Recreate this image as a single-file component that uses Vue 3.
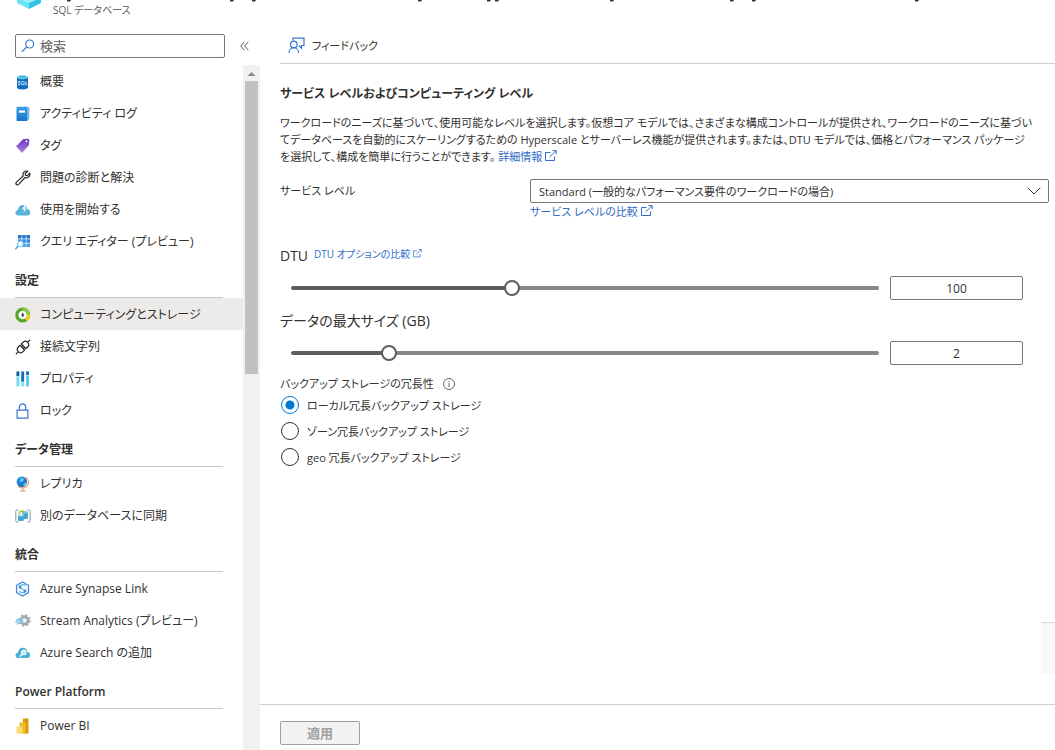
<script setup>
import { ref } from 'vue'

const search = ref('')
const tier = ref('standard')
const dtu = ref('100')
const maxSize = ref('2')
const dtuPosition = ref(372)
const sizePosition = ref(157)
const redundancy = ref('local')

const groups = [
  {
    title: '',
    items: [
      { icon: 'sql', label: '概要' },
      { icon: 'log', label: 'アクティビティ ログ' },
      { icon: 'tag', label: 'タグ' },
      { icon: 'wrench', label: '問題の診断と解決' },
      { icon: 'start', label: '使用を開始する' },
      { icon: 'query', label: 'クエリ エディター (プレビュー)' },
    ],
  },
  {
    title: '設定',
    items: [
      { icon: 'gauge', label: 'コンピューティングとストレージ', active: true },
      { icon: 'plug', label: '接続文字列' },
      { icon: 'props', label: 'プロパティ' },
      { icon: 'lock', label: 'ロック' },
    ],
  },
  {
    title: 'データ管理',
    items: [
      { icon: 'globe', label: 'レプリカ' },
      { icon: 'sync', label: '別のデータベースに同期' },
    ],
  },
  {
    title: '統合',
    items: [
      { icon: 'synapse', label: 'Azure Synapse Link' },
      { icon: 'stream', label: 'Stream Analytics (プレビュー)' },
      { icon: 'search-cloud', label: 'Azure Search の追加' },
    ],
  },
  {
    title: 'Power Platform',
    items: [{ icon: 'powerbi', label: 'Power BI' }],
  },
]

const redundancyOptions = [
  { value: 'local', label: 'ローカル冗長バックアップ ストレージ' },
  { value: 'zone', label: 'ゾーン冗長バックアップ ストレージ' },
  { value: 'geo', label: 'geo 冗長バックアップ ストレージ' },
]

// Descenders of the heading that is scrolled off above the top edge
const descenders = [0, 163, 185, 351, 420, 428, 543, 663, 685, 848]

const fill = (position) => ({ '--fill': `calc(8px + (100% - 16px) * ${position / 1000})` })
</script>

<template>
  <div class="page">
    <svg class="sprite" aria-hidden="true">
      <defs>
        <linearGradient id="g-tag" x1="0" y1="0" x2="0" y2="1">
          <stop offset="0" stop-color="#6a35c0" /><stop offset="1" stop-color="#b484e0" />
        </linearGradient>
        <linearGradient id="g-log" x1="0" y1="0" x2="0" y2="1">
          <stop offset="0" stop-color="#3aa0e8" /><stop offset="1" stop-color="#1673c8" />
        </linearGradient>
        <linearGradient id="g-globe" x1="0" y1="0" x2="1" y2="1">
          <stop offset="0" stop-color="#2a9be8" /><stop offset="1" stop-color="#0f5fb8" />
        </linearGradient>
        <symbol id="i-sql" viewBox="0 0 16 16">
          <path d="M2 3v10.2C2 14.5 4.5 15.500 7.500 15.500S13 14.500 13 13.200V3z" fill="#0f6bc0" />
          <ellipse cx="7.500" cy="3" rx="5.500" ry="2.200" fill="#8edff2" />
          <ellipse cx="7.500" cy="3.200" rx="3.800" ry="1.200" fill="#43b5dc" />
          <path d="M5.200 7.500H3.800c-.9 0-.9 1.500 0 1.500h.6c1 0 1 1.800 0 1.800H3M8.400 7.500H7.300c-.7 0-.9.5-.9 1.600s.2 1.600.9 1.600h1c.6 0 .8-.5.8-1.600s-.2-1.600-.7-1.600M8.200 10l1.100 1.300M10.800 7.300v3.400h1.500" fill="none" stroke="#e8f6ff" stroke-width=".9" />
        </symbol>
        <symbol id="i-log" viewBox="0 0 16 16">
          <path d="M3 1h11v12.800H3z" fill="#a9dcf5" />
          <path d="M2.500 .8H11.500c.6 0 1 .4 1 1V14c0 .6-.4 1-1 1H2.500c-.6 0-1-.4-1-1V1.800c0-.6.400-1 1-1z" fill="url(#g-log)" />
          <path d="M13.800 1.500v12" stroke="#4b9bd6" stroke-width=".8" />
          <rect x="4" y="4.500" width="6" height="2.200" fill="#fff" />
        </symbol>
        <symbol id="i-tag" viewBox="0 0 16 16">
          <path d="M1 8.300 8 1.200l5.200-.5 1.200 1.200-.5 5.300L7 15z" fill="url(#g-tag)" />
          <circle cx="11.500" cy="3.300" r="1" fill="#fff" />
        </symbol>
        <symbol id="i-wrench" viewBox="0 0 16 16">
          <path d="M12.800 1.200 10.200 3.500l.3 1.800 1.900.300 2.400-2.500c.6 2.300-1 4.700-3.300 4.700-.7 0-1-.1-1.500-.3l-6.300 6.900c-1.500 1.500-3.700-.5-2.400-2l6.900-6.400C7.200 3.200 9.300.3 12.800 1.200z" fill="#fff" stroke="#2b2b2b" stroke-width="1.200" stroke-linejoin="round" />
        </symbol>
        <symbol id="i-start" viewBox="0 0 16 16">
          <path d="M3.300 13.500C-.6 13.500-.4 8.100 3 7.900 3.200 4.300 6.600 1.700 9.700 3.500c1.600.8 2.200 2 2.500 3.500 3.700 0 4.100 6.300.4 6.500z" fill="#59b4d9" />
          <path d="M9.800 2.500 6.800 7.500h2.600L8.200 11l3.900-4.500H9.800L12 2.700z" fill="#e2f5fc" />
        </symbol>
        <symbol id="i-query" viewBox="0 0 16 16">
          <path d="M3 1h3.600v3.600H3zM7.200 1h3.600v3.600H7.200zM11.400 1H15v3.600h-3.600z" fill="#2475cf" />
          <path d="M3 5.200h3.600v3.600H3zM7.200 5.200h3.600v3.600H7.200zM11.400 5.200H15v3.600h-3.600z" fill="#3788e0" />
          <path d="M7.200 9.400h3.600V13H7.200zM11.400 9.400H15V13h-3.600z" fill="#4f9cec" />
          <path d="m.7 14.700 3-3" stroke="#3ca9df" stroke-width="1.500" stroke-linecap="round" />
          <circle cx="5.300" cy="10" r="2.900" fill="#effbff" stroke="#6bcff0" />
        </symbol>
        <symbol id="i-gauge" viewBox="0 0 16 16">
          <circle cx="7.700" cy="8" r="5.900" fill="#fff" stroke="#55a529" stroke-width="3.200" />
          <path d="M7.700 2.100A5.900 5.900 0 0 1 13.600 8" fill="none" stroke="#8dc63f" stroke-width="3.200" />
          <path d="M13.600 8a5.900 5.900 0 0 1-2.500 4.800" fill="none" stroke="#f3cf24" stroke-width="3.200" />
          <path d="M7.500 5.500 9.300 8l-1.600 2.500L6.300 8z" fill="#4c4c4c" />
        </symbol>
        <symbol id="i-plug" viewBox="0 0 16 16">
          <g transform="rotate(-45 8 8)" fill="none" stroke="#252525" stroke-width="1.200">
            <path d="M-2 8h3.500M14.500 8H18M7 4.700H4.700a3.300 3.300 0 0 0 0 6.600H7zM9 4.700h2.300a3.300 3.300 0 0 1 0 6.600H9zM7 6.700h2M7 9.300h2" />
          </g>
        </symbol>
        <symbol id="i-props" viewBox="0 0 16 16">
          <path d="M1.500 .5h2.800v15H1.500z" fill="#69daf0" /><path d="M1.500 .5h2.800v5H1.500z" fill="#195b9d" />
          <path d="M6.300 .5h2.800v15H6.300z" fill="#79def2" /><path d="M6.300 .5h2.800v10.500H6.300z" fill="#1d69b5" />
          <path d="M11.100 .5h2.800v15h-2.800z" fill="#48cdf0" /><path d="M11.100 .5h2.800v4h-2.800z" fill="#1870be" />
          <path d="M1 5.500h3.500M6 11h3.500M10.800 4.500h3.500" stroke="#fff" stroke-width=".6" />
        </symbol>
        <symbol id="i-lock" viewBox="0 0 16 16" fill="none" stroke="#3b72cf" stroke-width="1.200">
          <path d="M2.100 7.100h10.800v8H2.100zM4.300 7V4.300a3.200 3.500 0 0 1 6.400 0V7" />
        </symbol>
        <symbol id="i-globe" viewBox="0 0 16 16">
          <path d="M10.500 1.200c5 3 3.500 10.500-3 10.700-2 0-3.500-.7-4.800-2M7.700 12v2.500M5 14.900h5.600" fill="none" stroke="#e9a276" stroke-width="1.300" />
          <circle cx="6.800" cy="5.700" r="5.200" fill="url(#g-globe)" />
          <path d="M6.500 1.500 9 3 8 5.800l-2.500.5-.9-2zM8.500 7.500l2-1 .8 1-1.700 2.300-1.600-.7z" fill="#63cdea" />
        </symbol>
        <symbol id="i-sync" viewBox="0 0 16 16">
          <path d="M3.500 2H2Q.8 2 .8 3.500v9Q.8 14 2 14h1.500M12.500 2H14q1.200 0 1.200 1.500v9q0 1.500-1.200 1.500h-1.500" fill="none" stroke="#8795a2" stroke-width="1" />
          <path d="M7.500 4v6.300c0 1.100 5.500 1.100 5.500 0V4z" fill="#48a5cb" /><ellipse cx="10.250" cy="4" rx="2.750" ry="1.200" fill="#91cde0" />
          <path d="M3 7v5.200c0 1.200 5.800 1.200 5.800 0V7z" fill="#47a8d0" /><ellipse cx="5.900" cy="7" rx="2.900" ry="1.200" fill="#bfe5ef" />
          <path d="M3.500 5.500c.4-2.400 2-3.300 4-2.700V1.500l2.200 2-2.200 2V4.300c-1.300-.3-2.100 0-2.700 1.500z" fill="#94c83d" />
        </symbol>
        <symbol id="i-synapse" viewBox="0 0 16 16">
          <path d="m7.500 .9 6 3.400v7.300l-6 3.500-6-3.500V4.300z" fill="#f5fbff" stroke="#4288dc" stroke-width="1.200" />
          <path d="M11 4.500C8.500 3 4.500 3.800 4.500 6S10.500 8.300 10.500 10.200s-3.500 1.800-6.500.3" fill="none" stroke="#5ab5ea" stroke-width="1.200" />
          <circle cx="5" cy="6" r="1.500" fill="#3b91db" /><circle cx="10" cy="10" r="1.500" fill="#3b91db" />
        </symbol>
        <symbol id="i-stream" viewBox="0 0 16 16">
          <circle cx="9.500" cy="7.500" r="3.600" fill="#eef7fb" stroke="#a4a8ad" stroke-width="2.600" />
          <circle cx="9.500" cy="7.500" r="5.400" fill="none" stroke="#a4a8ad" stroke-width="1.600" stroke-dasharray="2.200 2.040" />
          <path d="M1 7c3 0 3.500-2 7-1.500M.3 9c4 0 4-2 8.200-1.300M1.500 11c3 0 3-2 6.500-1.200" fill="none" stroke="#7ec8ed" stroke-width="1.300" />
        </symbol>
        <symbol id="i-search-cloud" viewBox="0 0 16 16">
          <path d="M3.500 13C-.5 13-.3 8 3 7.800 3 3.500 7.500 1.300 10.500 3.600c1.200.9 1.700 2 1.900 3.300 3.700.1 3.700 6 .2 6.100z" fill="#4fb0d5" />
          <circle cx="8.800" cy="7.600" r="2.200" fill="#b5e4f5" stroke="#fff" stroke-width="1.100" /><path d="m7.200 9.300-2.400 2.200" stroke="#fff" stroke-width="1.300" />
        </symbol>
        <symbol id="i-powerbi" viewBox="0 0 16 16">
          <rect x="8" y=".5" width="5.500" height="15" rx=".5" fill="#d69b0b" />
          <path d="M4.500 4.500H10q.5 0 .5.500v10.500h-6z" fill="#edbd21" />
          <path d="M2 8.500h4.500q1 0 1 1v6H2q-.5 0-.5-.5V9q0-.5.500-.5z" fill="#f9dc70" />
        </symbol>
        <symbol id="i-external" viewBox="0 0 12 12" fill="none" stroke="currentColor">
          <path d="M5.500 2.500h-5v8h9V6.500M4.500 7 11 .8M7.500 .6h3.700v3.700" />
        </symbol>
      </defs>
    </svg>

    <svg class="clipped-title" aria-hidden="true" width="860" height="2" viewBox="0 0 860 2">
      <path v-for="x in descenders" :key="x" :d="`M${x} 0h4l-1 1.500h-3z`" fill="#333" />
    </svg>

    <aside class="sidebar">
      <header class="resource">
        <svg width="24" height="10" viewBox="0 0 24 10" aria-hidden="true">
          <path d="M0 0h12v9L0 3z" fill="#6fe3f6" /><path d="M12 0h12v3l-12 6z" fill="#35c2e8" /><path d="M5 0h14l-7 3z" fill="#9beefa" />
        </svg>
        <span>SQL データベース</span>
      </header>
      <div class="search-row">
        <label class="search">
          <svg width="14" height="14" viewBox="0 0 14 14" fill="none" stroke="#3a78d0" stroke-width="1.200" aria-hidden="true">
            <circle cx="8.700" cy="5" r="4" /><path d="M5.700 8 .8 12.900" />
          </svg>
          <input v-model="search" type="text" placeholder="検索" aria-label="検索" />
        </label>
        <button class="collapse" type="button" aria-label="メニューを折りたたむ">
          <svg width="9" height="10" viewBox="0 0 9 10" fill="none" stroke="#666"><path d="M4.300 .7.700 5l3.600 4.300M8.300.7 4.700 5l3.600 4.300" /></svg>
        </button>
      </div>
      <div class="menu">
        <nav class="nav">
          <section v-for="group in groups" :key="group.title">
            <h2 v-if="group.title" class="group-title">{{ group.title }}</h2>
            <ul>
              <li v-for="item in group.items" :key="item.label">
                <a href="#" class="item" :class="{ active: item.active }">
                  <svg width="16" height="16" aria-hidden="true"><use :href="`#i-${item.icon}`" /></svg>
                  <span>{{ item.label }}</span>
                </a>
              </li>
            </ul>
          </section>
        </nav>
        <div class="scrollbar" aria-hidden="true">
          <svg width="17" height="16" viewBox="0 0 17 16"><path d="M4.500 11h8l-4-4z" fill="#8a8a8a" /></svg>
          <div class="thumb"></div>
        </div>
      </div>
    </aside>

    <main class="main">
      <div class="toolbar">
        <button type="button" class="feedback">
          <svg width="17" height="17" viewBox="0 0 17 17" fill="none" stroke="#3475cc" stroke-width="1.200" aria-hidden="true">
            <path d="M5 3.500V1.100h11v7.400h-2.500v2.700L11 8.500M1 16c0-7 9.600-7 9.600 0" /><circle cx="5.800" cy="7.500" r="3.300" />
          </svg>
          <span>フィードバック</span>
        </button>
      </div>

      <form class="content" @submit.prevent>
        <h1>サービス レベルおよびコンピューティング レベル</h1>
        <p class="intro">
          ワークロードのニーズに基づいて、使用可能なレベルを選択します。仮想コア モデルでは、さまざまな構成コントロールが提供され、ワークロードのニーズに基づい<br />てデータベースを自動的にスケーリングするための Hyperscale とサーバーレス機能が提供されます。または、DTU モデルでは、価格とパフォーマンス パッケージ<br />を選択して、構成を簡単に行うことができます。
          <a href="#">詳細情報 <svg width="12" height="12" aria-hidden="true"><use href="#i-external" /></svg></a>
        </p>

        <div class="tier-row">
          <label for="tier">サービス レベル</label>
          <div class="tier-field">
            <div class="select">
              <select id="tier" v-model="tier">
                <option value="standard">Standard (一般的なパフォーマンス要件のワークロードの場合)</option>
              </select>
              <svg width="14" height="8" viewBox="0 0 14 8" fill="none" stroke="#444" aria-hidden="true"><path d="m.7.700 6.300 6.300L13.300.7" /></svg>
            </div>
            <a href="#">サービス レベルの比較 <svg width="12" height="12" aria-hidden="true"><use href="#i-external" /></svg></a>
          </div>
        </div>

        <div class="slider-title">
          <label for="dtu">DTU</label>
          <a href="#">DTU オプションの比較 <svg width="9" height="9" aria-hidden="true"><use href="#i-external" /></svg></a>
        </div>
        <div class="slider-row">
          <input id="dtu" v-model="dtuPosition" type="range" min="0" max="1000" :style="fill(dtuPosition)" />
          <input v-model="dtu" type="text" class="number" aria-label="DTU" />
        </div>

        <div class="slider-title">
          <label for="size">データの最大サイズ (GB)</label>
        </div>
        <div class="slider-row">
          <input id="size" v-model="sizePosition" type="range" min="0" max="1000" :style="fill(sizePosition)" />
          <input v-model="maxSize" type="text" class="number" aria-label="データの最大サイズ (GB)" />
        </div>

        <fieldset>
          <legend>
            バックアップ ストレージの冗長性
            <svg width="12" height="12" viewBox="0 0 12 12" fill="none" stroke="#666" aria-hidden="true"><circle cx="6" cy="6" r="5.500" /><path d="M6 5v4M6 2.800V4" /></svg>
          </legend>
          <label v-for="option in redundancyOptions" :key="option.value" class="radio">
            <input v-model="redundancy" type="radio" name="redundancy" :value="option.value" />
            <span>{{ option.label }}</span>
          </label>
        </fieldset>
      </form>

      <footer class="footer">
        <button type="button" class="apply" disabled>適用</button>
      </footer>
      <div class="side-tab"></div>
    </main>
  </div>
</template>

<style>
body {
  background: #fff;
}
</style>

<style scoped>
* {
  box-sizing: border-box;
}
.page {
  position: relative;
  display: flex;
  height: 100vh;
  overflow: hidden;
  color: #323130;
  font: 12px/17px "Open Sans", "Noto Sans CJK JP", sans-serif;
  font-feature-settings: "palt";
  white-space: nowrap;
}
input, select, button {
  font: inherit;
  font-feature-settings: inherit;
  color: inherit;
}
a {
  color: #316cc7;
  text-decoration: none;
}
.sprite {
  position: absolute;
  width: 0;
  height: 0;
}
.clipped-title {
  position: absolute;
  top: 0;
  left: 67px;
}
.sidebar {
  display: flex;
  flex-direction: column;
  flex: 0 0 260px;
  min-height: 0;
}
.resource {
  display: flex;
  gap: 12px;
  height: 34px;
  padding-left: 17px;
  color: #605e5c;
  font-size: 10px;
}
.resource span {
  padding-top: 2px;
}
.search-row {
  display: flex;
  align-items: center;
  gap: 10px;
  padding-left: 15px;
}
.search {
  display: flex;
  align-items: center;
  gap: 5px;
  width: 210px;
  height: 24px;
  padding: 0 5px;
  border: 1px solid #777;
  border-radius: 2px;
}
.search input {
  flex: 1;
  min-width: 0;
  padding: 0;
  border: 0;
  outline: 0;
  background: none;
  font-size: 13px;
}
.search input::placeholder {
  color: #605e5c;
  opacity: 1;
}
.collapse {
  display: flex;
  padding: 5px;
  border: 0;
  background: none;
}
.menu {
  display: flex;
  flex: 1;
  min-height: 0;
  margin-top: 7px;
}
.nav {
  flex: 1;
  overflow: hidden;
}
ul {
  margin: 0;
  padding: 0;
  list-style: none;
}
.item {
  display: flex;
  align-items: center;
  gap: 9px;
  height: 32px;
  padding: 1px 0 0 15px;
  color: inherit;
}
.item.active {
  background: #edebe9;
}
.group-title {
  height: 41px;
  margin: 0 20px 0 15px;
  padding-top: 15px;
  border-bottom: 1px solid #c8c6c4;
  font-size: 12px;
  font-weight: 600;
  line-height: 17px;
}
.scrollbar {
  width: 17px;
  background: #f1f1f1;
}
.scrollbar svg {
  display: block;
}
.thumb {
  height: 293px;
  margin: 0 2px;
  background: #c1c1c1;
}
.main {
  position: relative;
  display: flex;
  flex: 1;
  flex-direction: column;
  min-width: 0;
}
.toolbar {
  height: 64px;
  margin-left: 20px;
  padding: 37px 0 0 8px;
  border-bottom: 1px solid #d2d0ce;
  font-size: 11px;
}
.feedback {
  display: flex;
  align-items: center;
  gap: 7px;
  padding: 0;
  border: 0;
  background: none;
}
.content {
  flex: 1;
  padding: 20px 6px 0 20px;
  font-size: 11px;
}
h1 {
  margin: 0 0 10px;
  font-size: 12px;
  font-weight: 600;
  line-height: 20px;
}
.intro {
  margin: 0;
}
.intro svg, .tier-field a svg {
  vertical-align: -1px;
}
.tier-row {
  display: flex;
  margin-top: 14px;
}
.tier-row > label {
  flex: 0 0 250px;
  line-height: 24px;
}
.tier-field {
  flex: 1;
}
.select {
  display: flex;
  position: relative;
  align-items: center;
}
.select select {
  width: 100%;
  height: 24px;
  padding: 0 30px 0 8px;
  appearance: none;
  border: 1px solid #777;
  border-radius: 2px;
  background: #fff;
}
.select svg {
  position: absolute;
  right: 8px;
  pointer-events: none;
}
.slider-title {
  display: flex;
  gap: 6px;
  height: 20px;
  margin-top: 16px;
  font-size: 14px;
  line-height: 20px;
}
.tier-row + .slider-title {
  margin-top: 26px;
}
.slider-title a {
  font-size: 10px;
  line-height: 17px;
}
.slider-row {
  display: flex;
  align-items: center;
  gap: 11px;
  height: 24px;
  margin: 10px 26px 0 11px;
}
.slider-row + .slider-title {
  margin-top: 11px;
}
input[type="range"] {
  flex: 1;
  min-width: 0;
  height: 16px;
  margin: 0;
  appearance: none;
  background: none;
}
input[type="range"]::-webkit-slider-runnable-track {
  height: 4px;
  border-radius: 2px;
  background: linear-gradient(to right, #605e5c var(--fill), #8a8886 var(--fill));
}
input[type="range"]::-webkit-slider-thumb {
  width: 16px;
  height: 16px;
  margin-top: -6px;
  appearance: none;
  border: 2px solid #605e5c;
  border-radius: 50%;
  background: #fff;
}
.number {
  width: 133px;
  height: 24px;
  padding: 0;
  border: 1px solid #777;
  border-radius: 2px;
  font-size: 12px;
  text-align: center;
}
fieldset {
  margin: 10px 0 0;
  padding: 0;
  border: 0;
}
legend {
  display: flex;
  align-items: center;
  gap: 9px;
  padding: 0;
}
.radio {
  display: flex;
  align-items: center;
  gap: 7px;
  width: max-content;
  height: 26px;
}
.radio input {
  width: 18px;
  height: 18px;
  margin: 0 1px;
  appearance: none;
  border: 1px solid #323130;
  border-radius: 50%;
}
.radio input:checked {
  border-color: #0078d4;
  background: radial-gradient(circle, #0078d4 4px, transparent 5px);
}
.footer {
  padding: 16px 20px 5px;
  border-top: 1px solid #d2d0ce;
}
.apply {
  display: block;
  width: 80px;
  height: 24px;
  padding: 0;
  border: 1px solid #a19f9d;
  border-radius: 2px;
  background: #f3f2f1;
  color: #a19f9d;
  font-size: 13px;
  font-weight: 600;
}
.side-tab {
  position: absolute;
  right: 0;
  bottom: 76px;
  width: 14px;
  height: 52px;
  border-top: 1px solid #d8d8d8;
  background: #f8f8f8;
}
</style>
